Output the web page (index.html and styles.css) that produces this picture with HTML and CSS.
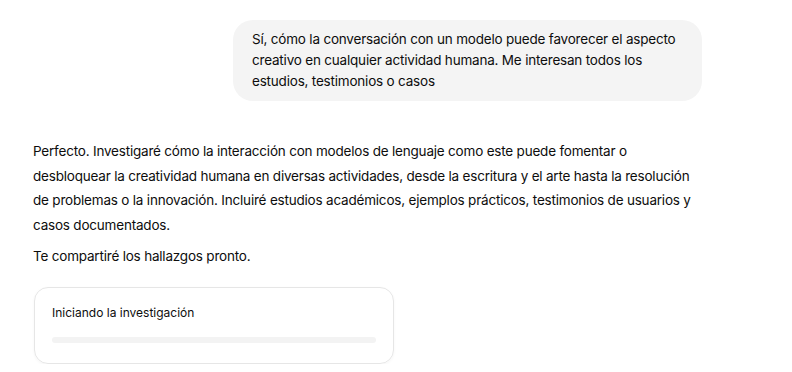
FILE: index.html
```html
<!DOCTYPE html>
<html lang="es">
<head>
<meta charset="utf-8">
<title>Chat</title>
<link rel="stylesheet" href="styles.css">
</head>
<body>
<main class="chat">
  <div class="user-row">
    <div class="bubble">Sí, cómo la conversación con un modelo puede favorecer el aspecto creativo en cualquier actividad humana. Me interesan todos los estudios, testimonios o casos</div>
  </div>
  <div class="assistant">
    <p class="para">Perfecto. Investigaré cómo la interacción con modelos de lenguaje como este puede fomentar o desbloquear la creatividad humana en diversas actividades, desde la escritura y el arte hasta la resolución de problemas o la innovación. Incluiré estudios académicos, ejemplos prácticos, testimonios de usuarios y casos documentados.</p>
    <p class="para">Te compartiré los hallazgos pronto.</p>
    <div class="card">
      <div class="card-title">Iniciando la investigación</div>
      <div class="bar"></div>
    </div>
  </div>
</main>
</body>
</html>
```

FILE: styles.css
```css
* { box-sizing: border-box; }
html, body {
  margin: 0;
  padding: 0;
  background: #ffffff;
}
body {
  font-family: Inter, "Noto Sans", "Liberation Sans", sans-serif;
  color: #0d0d0d;
  -webkit-font-smoothing: antialiased;
}
.chat {
  padding-top: 20px;
}
.user-row {
  display: flex;
  justify-content: flex-end;
  padding-right: 90px;
}
.bubble {
  width: 469px;
  background: #f4f4f4;
  border-radius: 20px;
  padding: 9px 18px 9px 19px;
  font-size: 13.5px;
  letter-spacing: -0.2px;
  line-height: 21px;
}
.assistant {
  padding-left: 33px;
  margin-top: 38px;
  width: 705px;
}
.para {
  margin: 0 0 7px 0;
  font-size: 13.5px;
  letter-spacing: -0.2px;
  line-height: 24.5px;
}
.card {
  margin-top: 18px;
  margin-left: 1px;
  width: 360px;
  height: 77px;
  border: 1px solid #e6e6e6;
  border-radius: 14px;
  box-shadow: 0 1px 3px rgba(0,0,0,0.04);
  padding: 16px 17px 0 17px;
}
.card-title {
  font-size: 12px;
  line-height: 18px;
}
.bar {
  margin-top: 15px;
  height: 6px;
  border-radius: 3px;
  background: #f3f3f3;
}
```
